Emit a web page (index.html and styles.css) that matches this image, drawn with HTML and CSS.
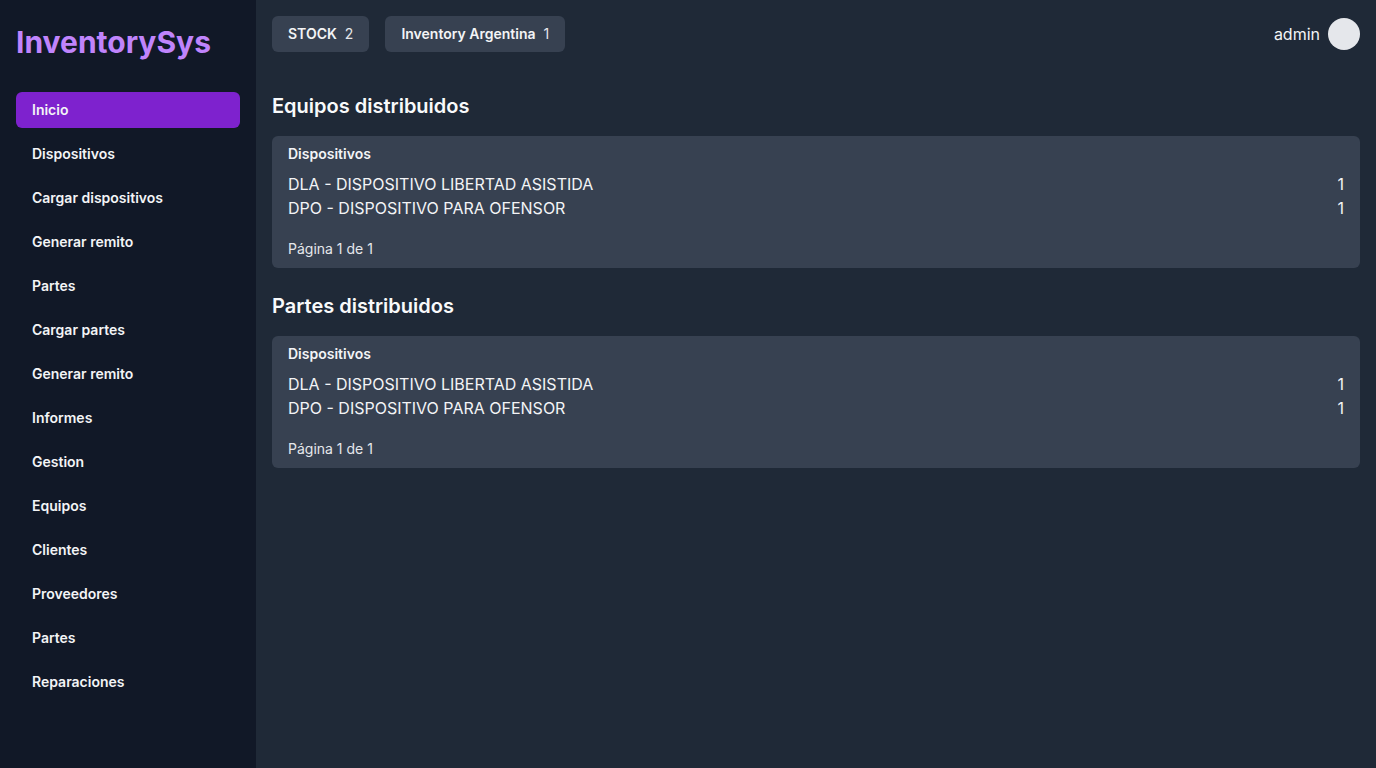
FILE: index.html
```html
<!DOCTYPE html>
<html lang="es">
<head>
<meta charset="utf-8">
<title>InventorySys</title>
<link rel="stylesheet" href="styles.css">
</head>
<body>
<div class="layout">
  <aside class="sidebar">
    <div class="logo">InventorySys</div>
    <nav class="nav">
      <a class="nav-item active">Inicio</a>
      <a class="nav-item">Dispositivos</a>
      <a class="nav-item">Cargar dispositivos</a>
      <a class="nav-item">Generar remito</a>
      <a class="nav-item">Partes</a>
      <a class="nav-item">Cargar partes</a>
      <a class="nav-item">Generar remito</a>
      <a class="nav-item">Informes</a>
      <a class="nav-item">Gestion</a>
      <a class="nav-item">Equipos</a>
      <a class="nav-item">Clientes</a>
      <a class="nav-item">Proveedores</a>
      <a class="nav-item">Partes</a>
      <a class="nav-item">Reparaciones</a>
    </nav>
  </aside>
  <main class="main">
    <header class="topbar">
      <div class="badges">
        <div class="badge"><span class="badge-label">STOCK</span><span class="badge-count">2</span></div>
        <div class="badge"><span class="badge-label">Inventory Argentina</span><span class="badge-count">1</span></div>
      </div>
      <div class="user">
        <span class="user-name">admin</span>
        <span class="avatar"></span>
      </div>
    </header>

    <section class="section">
      <h2 class="section-title">Equipos distribuidos</h2>
      <div class="card">
        <div class="card-head">Dispositivos</div>
        <div class="row"><span>DLA - DISPOSITIVO LIBERTAD ASISTIDA</span><span>1</span></div>
        <div class="row"><span>DPO - DISPOSITIVO PARA OFENSOR</span><span>1</span></div>
        <div class="card-foot">Página 1 de 1</div>
      </div>
    </section>

    <section class="section">
      <h2 class="section-title">Partes distribuidos</h2>
      <div class="card">
        <div class="card-head">Dispositivos</div>
        <div class="row"><span>DLA - DISPOSITIVO LIBERTAD ASISTIDA</span><span>1</span></div>
        <div class="row"><span>DPO - DISPOSITIVO PARA OFENSOR</span><span>1</span></div>
        <div class="card-foot">Página 1 de 1</div>
      </div>
    </section>
  </main>
</div>
</body>
</html>
```

FILE: styles.css
```css
* { box-sizing: border-box; }
html, body {
  margin: 0;
  padding: 0;
  height: 100%;
}
body {
  font-family: Inter, "Noto Sans", "Liberation Sans", sans-serif;
  color: #f3f4f6;
  background: #1f2937;
}
.layout {
  display: flex;
  min-height: 768px;
}
.sidebar {
  width: 256px;
  flex: none;
  background: #111827;
  padding: 24px 16px;
}
.logo {
  font-size: 30px;
  line-height: 36px;
  font-weight: 700;
  color: #c084fc;
  margin-bottom: 32px;
}
.nav {
  display: flex;
  flex-direction: column;
  gap: 8px;
}
.nav-item {
  display: block;
  height: 36px;
  line-height: 36px;
  padding: 0 16px;
  border-radius: 6px;
  font-size: 14px;
  font-weight: 600;
  color: #f3f4f6;
}
.nav-item.active {
  background: #7e22ce;
}
.main {
  flex: 1;
  padding: 16px;
}
.topbar {
  display: flex;
  justify-content: space-between;
  align-items: center;
  height: 36px;
  margin-bottom: 40px;
}
.badges {
  display: flex;
  gap: 16px;
}
.badge {
  height: 36px;
  display: flex;
  align-items: center;
  gap: 8px;
  padding: 0 16px 1px;
  background: #374151;
  border-radius: 6px;
  font-size: 14px;
}
.badge-label { font-weight: 600; }
.badge-count { font-weight: 400; color: #e5e7eb; }
.user {
  display: flex;
  align-items: center;
  gap: 8px;
}
.user-name {
  font-size: 16px;
  color: #f3f4f6;
}
.avatar {
  width: 32px;
  height: 32px;
  border-radius: 50%;
  background: #e5e7eb;
}
.section + .section {
  margin-top: 24px;
}
.section-title {
  margin: 0 0 16px;
  font-size: 20px;
  line-height: 28px;
  font-weight: 600;
  color: #f9fafb;
}
.card {
  background: #374151;
  border-radius: 6px;
  padding: 8px 16px 9px;
}
.card-head {
  font-size: 14px;
  line-height: 20px;
  font-weight: 600;
  margin-bottom: 8px;
}
.row {
  display: flex;
  justify-content: space-between;
  font-size: 16px;
  line-height: 24px;
}
.card-foot {
  margin-top: 19px;
  font-size: 14px;
  line-height: 20px;
  color: #e5e7eb;
}
```
